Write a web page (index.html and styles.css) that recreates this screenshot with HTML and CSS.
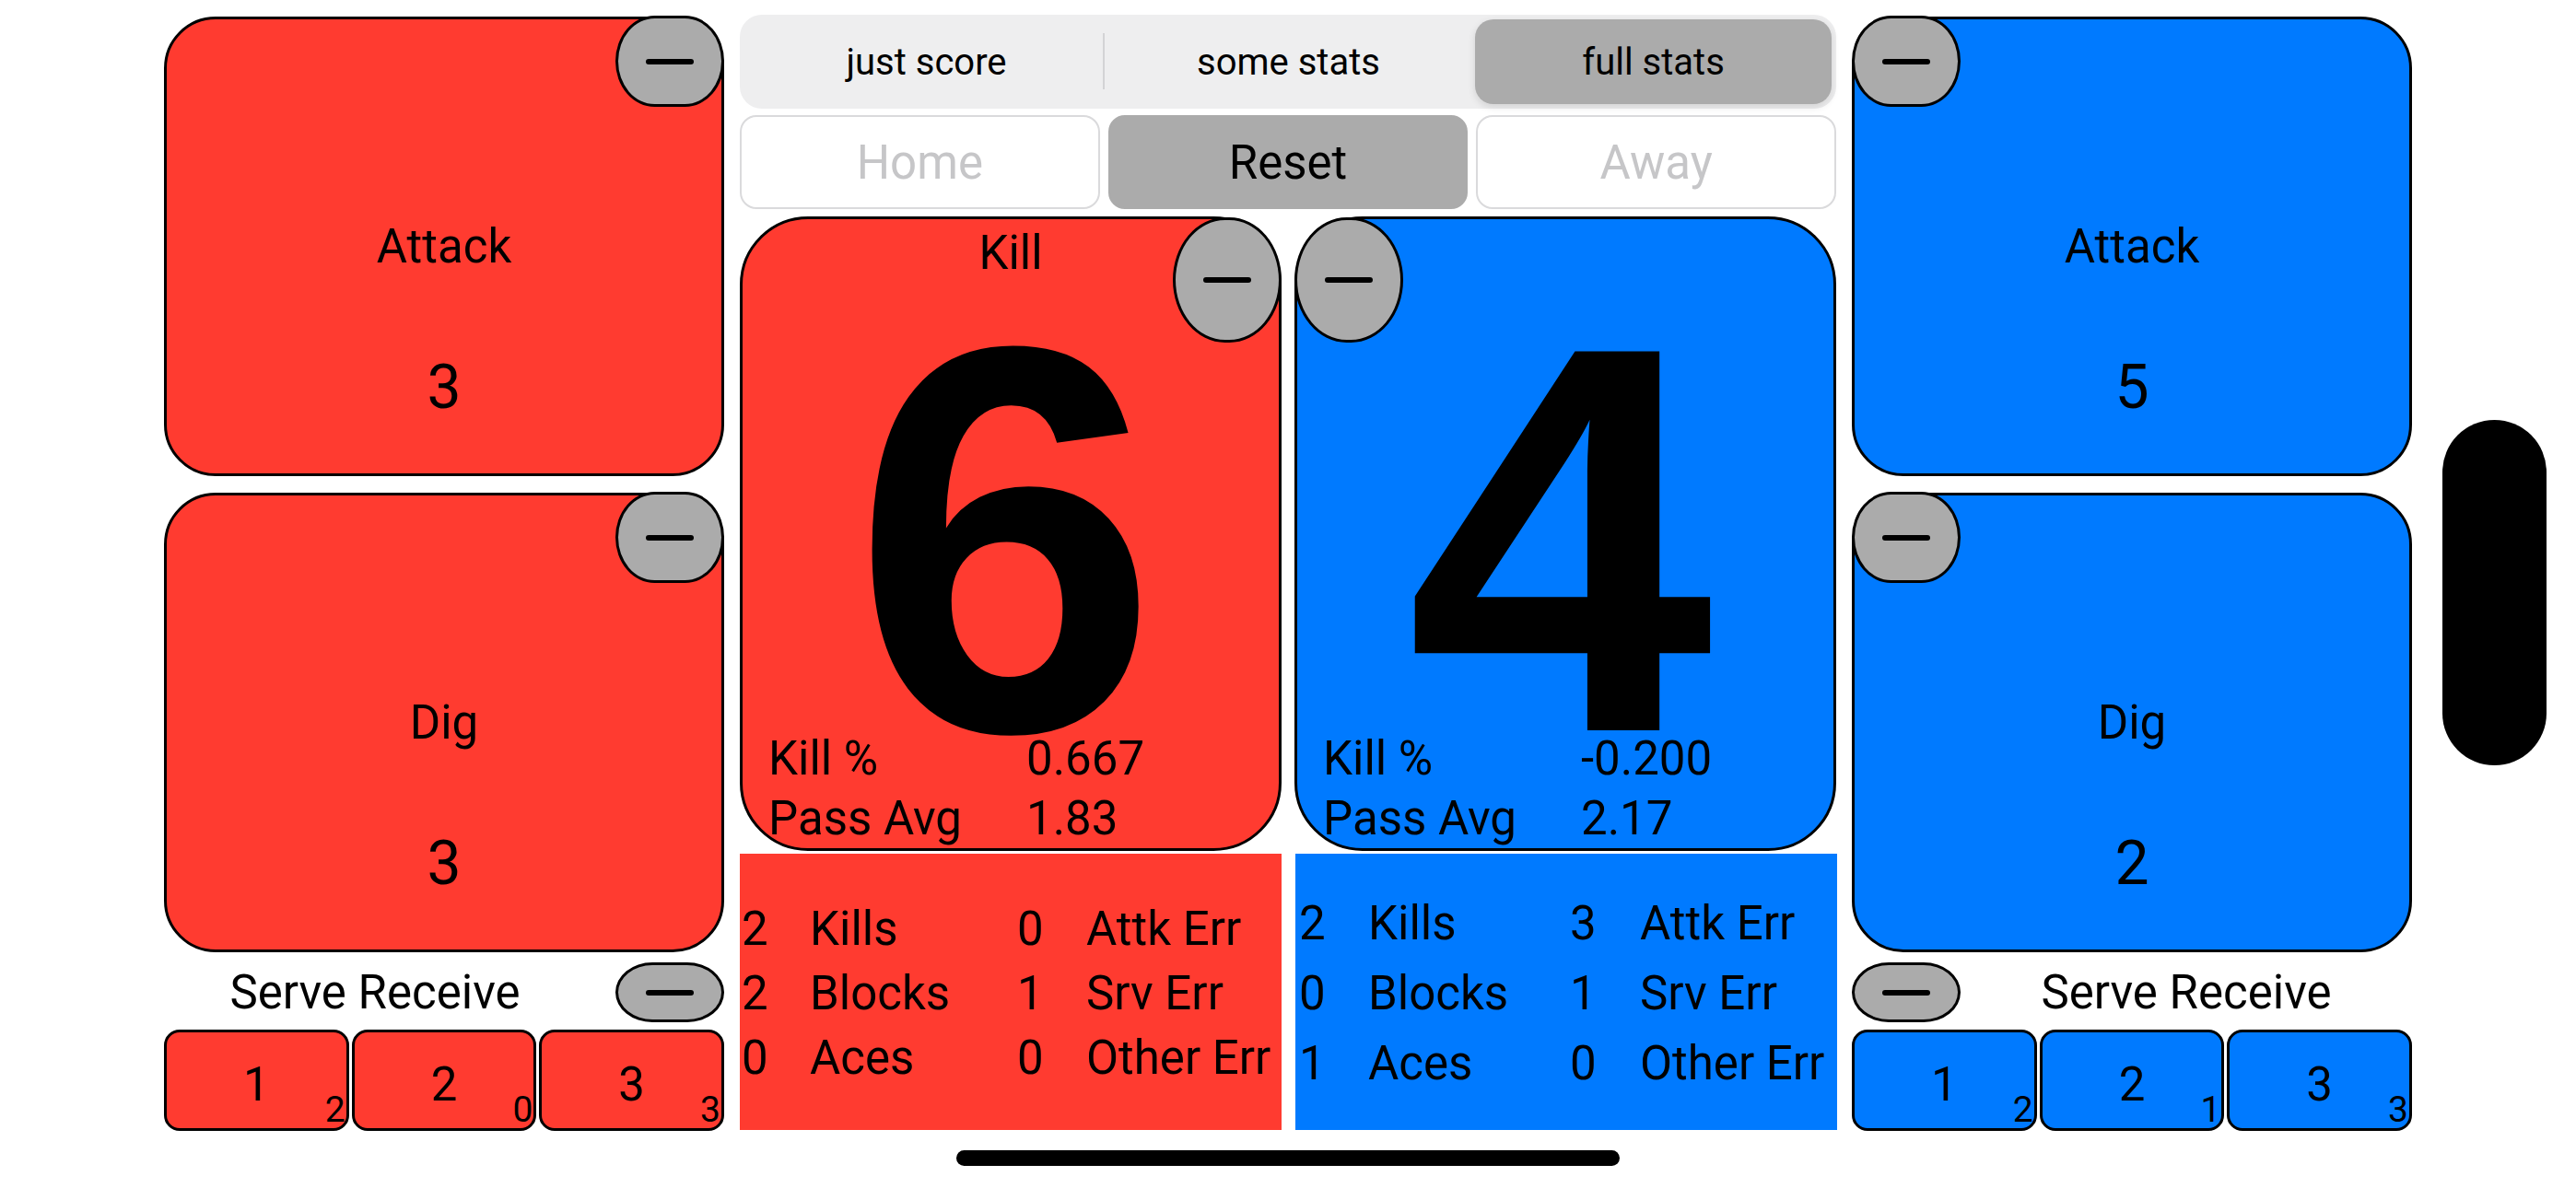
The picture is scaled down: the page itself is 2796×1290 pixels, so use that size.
FILE: index.html
```html
<!DOCTYPE html>
<html>
<head>
<meta charset="utf-8">
<title>Volleyball Stats</title>
<link rel="stylesheet" href="styles.css">
</head>
<body>
<div class="screen">
  <div class="side home-side">
    <div class="stat-card red">
      <div class="card-label">Attack</div>
      <div class="card-value">3</div>
      <div class="minus corner right"><span class="bar"></span></div>
    </div>
    <div class="stat-card red">
      <div class="card-label">Dig</div>
      <div class="card-value">3</div>
      <div class="minus corner right"><span class="bar"></span></div>
    </div>
    <div class="serve-head">
      <div class="serve-title home-title">Serve Receive</div>
      <div class="minus pill"><span class="bar"></span></div>
    </div>
    <div class="serve-row">
      <div class="serve-btn red">1<span class="sub">2</span></div>
      <div class="serve-btn red">2<span class="sub">0</span></div>
      <div class="serve-btn red">3<span class="sub">3</span></div>
    </div>
  </div>

  <div class="center">
    <div class="segmented">
      <div class="seg sep">just score</div>
      <div class="seg">some stats</div>
      <div class="seg sel">full stats</div>
    </div>
    <div class="team-row">
      <div class="team-btn">Home</div>
      <div class="team-btn reset">Reset</div>
      <div class="team-btn">Away</div>
    </div>
    <div class="scores">
      <div class="score red">
        <div class="score-label">Kill</div>
        <div class="big"><span class="big-num">6</span></div>
        <div class="rates">
          <span>Kill %</span><span>0.667</span>
          <span>Pass Avg</span><span>1.83</span>
        </div>
        <div class="minus oval right"><span class="bar"></span></div>
      </div>
      <div class="score blue">
        <div class="score-label"></div>
        <div class="big"><span class="big-num">4</span></div>
        <div class="rates">
          <span>Kill %</span><span>-0.200</span>
          <span>Pass Avg</span><span>2.17</span>
        </div>
        <div class="minus oval left"><span class="bar"></span></div>
      </div>
    </div>
    <div class="boxes">
      <div class="box red">
        <div class="box-row"><span>2</span><span>Kills</span><span>0</span><span>Attk Err</span></div>
        <div class="box-row"><span>2</span><span>Blocks</span><span>1</span><span>Srv Err</span></div>
        <div class="box-row"><span>0</span><span>Aces</span><span>0</span><span>Other Err</span></div>
      </div>
      <div class="box blue wide">
        <div class="box-row"><span>2</span><span>Kills</span><span>3</span><span>Attk Err</span></div>
        <div class="box-row"><span>0</span><span>Blocks</span><span>1</span><span>Srv Err</span></div>
        <div class="box-row"><span>1</span><span>Aces</span><span>0</span><span>Other Err</span></div>
      </div>
    </div>
  </div>

  <div class="side away-side">
    <div class="stat-card blue">
      <div class="card-label">Attack</div>
      <div class="card-value">5</div>
      <div class="minus corner left"><span class="bar"></span></div>
    </div>
    <div class="stat-card blue">
      <div class="card-label">Dig</div>
      <div class="card-value">2</div>
      <div class="minus corner left"><span class="bar"></span></div>
    </div>
    <div class="serve-head">
      <div class="minus pill"><span class="bar"></span></div>
      <div class="serve-title">Serve Receive</div>
    </div>
    <div class="serve-row">
      <div class="serve-btn blue">1<span class="sub">2</span></div>
      <div class="serve-btn blue">2<span class="sub">1</span></div>
      <div class="serve-btn blue">3<span class="sub">3</span></div>
    </div>
  </div>
</div>
<div class="island"></div>
<div class="home-indicator"></div>
</body>
</html>
```

FILE: styles.css
```css
html, body {
  margin: 0;
  padding: 0;
}
body {
  width: 2796px;
  height: 1290px;
  background: #ffffff;
  color: #000000;
  font-family: Roboto, "Liberation Sans", Arial, sans-serif;
  position: relative;
  overflow: hidden;
}
.screen {
  display: grid;
  grid-template-columns: 608px 1190px 608px;
  column-gap: 17px;
  padding-left: 178px;
}
.red { background: #FF3B30; }
.blue { background: #007AFF; }

/* side columns */
.side {
  display: flex;
  flex-direction: column;
  padding-top: 18px;
}
.stat-card {
  position: relative;
  box-sizing: border-box;
  height: 499px;
  border: 3px solid #000;
  border-radius: 56px;
  display: flex;
  flex-direction: column;
  align-items: center;
  padding-top: 217px;
}
.stat-card + .stat-card { margin-top: 18px; }
.card-label {
  font-size: 51px;
  line-height: 60px;
}
.card-value {
  font-size: 66px;
  line-height: 78px;
  margin-top: 84px;
}

/* minus buttons */
.minus {
  box-sizing: border-box;
  width: 118px;
  background: #ABABAB;
  border: 3px solid #000;
  display: flex;
  align-items: center;
  justify-content: center;
  flex: none;
}
.minus .bar {
  display: block;
  width: 52px;
  height: 6px;
  background: #000;
  border-radius: 3px;
}
.minus.corner {
  position: absolute;
  top: -4px;
  height: 99px;
  border-radius: 36% / 50%;
}
.minus.corner.right { right: -3px; }
.minus.corner.left { left: -3px; }
.minus.pill {
  height: 65px;
  border-radius: 34% / 50%;
}
.minus.oval {
  position: absolute;
  top: -2px;
  height: 136px;
  border-radius: 48% / 50%;
}
.minus.oval.right { right: -3px; }
.minus.oval.left { left: -3px; }

/* serve receive */
.serve-head {
  display: flex;
  align-items: center;
  height: 65px;
  margin-top: 11px;
}
.serve-title {
  flex: 1;
  text-align: center;
  font-size: 51px;
  line-height: 60px;
}
.home-title { padding-right: 32px; }
.serve-row {
  margin-top: 8px;
  display: grid;
  grid-template-columns: repeat(3, 1fr);
  gap: 3px;
  height: 110px;
}
.serve-btn {
  position: relative;
  box-sizing: border-box;
  border: 3px solid #000;
  border-radius: 17px;
  display: flex;
  align-items: center;
  justify-content: center;
  font-size: 51px;
  padding-top: 8px;
}
.sub {
  position: absolute;
  right: 1px;
  bottom: 0px;
  font-size: 39px;
  line-height: 39px;
}

/* center column */
.center {
  display: flex;
  flex-direction: column;
  padding-top: 16px;
}
.segmented {
  box-sizing: border-box;
  height: 102px;
  background: #EEEEEF;
  border-radius: 24px;
  padding: 5px 5px 5px 6px;
  display: grid;
  grid-template-columns: repeat(3, 1fr);
}
.seg {
  position: relative;
  display: flex;
  align-items: center;
  justify-content: center;
  font-size: 40px;
  border-radius: 20px;
}
.seg.sep::after {
  content: "";
  position: absolute;
  right: 3px;
  top: 15px;
  bottom: 16px;
  width: 2px;
  background: #D3D3D5;
}
.seg.sel {
  background: #ABABAB;
  margin-left: 6px;
  box-shadow: 0 3px 8px rgba(0, 0, 0, 0.12);
}
.team-row {
  margin-top: 7px;
  height: 102px;
  display: grid;
  grid-template-columns: repeat(3, 1fr);
  gap: 9px;
}
.team-btn {
  box-sizing: border-box;
  border: 2px solid #DADADC;
  border-radius: 18px;
  background: #fff;
  color: #C6C6C8;
  font-size: 51px;
  display: flex;
  align-items: center;
  justify-content: center;
}
.team-btn.reset {
  background: #ABABAB;
  border-color: #ABABAB;
  color: #000;
}
.scores {
  margin-top: 8px;
  height: 685px;
  display: grid;
  grid-template-columns: 1fr 1fr;
  gap: 14px;
}
.score {
  position: relative;
  box-sizing: border-box;
  border: 3px solid #000;
  border-radius: 74px;
  display: flex;
  flex-direction: column;
  padding-top: 7px;
}
.score-label {
  height: 60px;
  font-size: 51px;
  line-height: 60px;
  text-align: center;
}
.big {
  box-sizing: border-box;
  height: 486px;
  padding-top: 76px;
  padding-right: 12px;
  text-align: center;
  font-family: "Liberation Sans", Arial, sans-serif;
  font-weight: 700;
  font-size: 598px;
  line-height: 410px;
}
.rates {
  display: grid;
  grid-template-columns: 280px 1fr;
  padding-left: 28px;
  font-size: 51px;
  line-height: 65px;
  white-space: nowrap;
}
.boxes {
  margin-top: 7px;
  height: 300px;
  display: grid;
  grid-template-columns: 588px 588px;
  column-gap: 15px;
}
.box {
  display: flex;
  flex-direction: column;
  justify-content: center;
  padding-left: 2px;
  font-size: 51px;
  padding-top: 4px;
}
.box-row {
  display: grid;
  grid-template-columns: 74px 225px 75px auto;
  line-height: 70px;
  white-space: nowrap;
}
.box.wide { padding-left: 4px; }
.box.wide .box-row {
  line-height: 76px;
  grid-template-columns: 75px 219px 76px auto;
}

/* device overlays */
.island {
  position: absolute;
  left: 2651px;
  top: 456px;
  width: 113px;
  height: 375px;
  border-radius: 57px;
  background: #000;
}
.home-indicator {
  position: absolute;
  left: 1038px;
  top: 1249px;
  width: 720px;
  height: 17px;
  border-radius: 9px;
  background: #000;
}
```
